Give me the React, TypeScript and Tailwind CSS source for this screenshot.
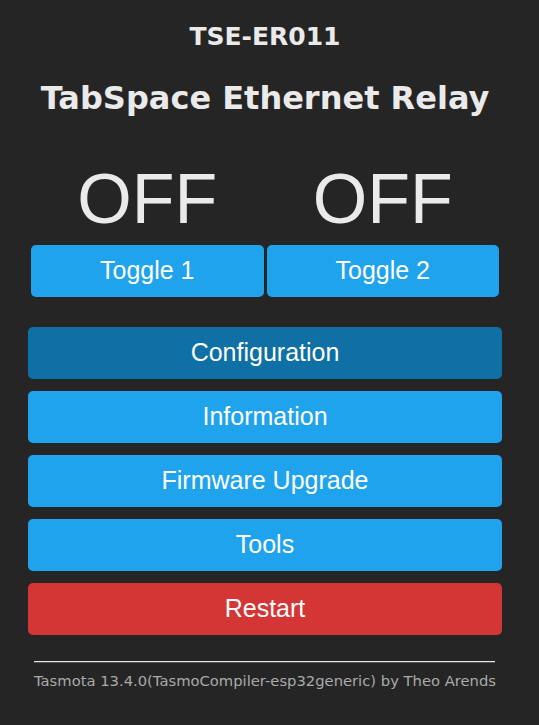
import React from "react";

const btn =
  "h-[52px] w-full rounded-[5px] flex items-center justify-center text-[25px] text-white";

export default function App() {
  return (
    <div className="min-h-[725px] w-full bg-[#252525] text-[#eaeaea]">
      <div className="ml-[28px] w-[474px] flex flex-col">
        <div
          className="pt-[25px] text-center text-[25px] leading-[24px] font-bold"
          style={{ fontFamily: '"DejaVu Sans", Verdana, sans-serif' }}
        >
          TSE-ER011
        </div>
        <div
          className="mt-[33px] text-center text-[32px] leading-[32px] font-bold"
          style={{ fontFamily: '"DejaVu Sans", Verdana, sans-serif' }}
        >
          TabSpace Ethernet Relay
        </div>
        <div style={{ fontFamily: '"Liberation Sans", Arial, sans-serif' }}>
          <div className="mt-[50px] flex px-[3px] gap-[3px]">
            <div className="flex-1 text-center text-[70px] leading-[70px]">OFF</div>
            <div className="flex-1 text-center text-[70px] leading-[70px]">OFF</div>
          </div>
          <div className="mt-[11px] flex px-[3px] gap-[3px]">
            <div className={btn + " bg-[#1fa3ec]"}>Toggle 1</div>
            <div className={btn + " bg-[#1fa3ec]"}>Toggle 2</div>
          </div>
          <div className="mt-[30px] flex flex-col gap-[12px]">
            <div className={btn + " bg-[#0e70a4]"}>Configuration</div>
            <div className={btn + " bg-[#1fa3ec]"}>Information</div>
            <div className={btn + " bg-[#1fa3ec]"}>Firmware Upgrade</div>
            <div className={btn + " bg-[#1fa3ec]"}>Tools</div>
            <div className={btn + " bg-[#d43535]"}>Restart</div>
          </div>
        </div>
        <div className="mt-[26px] ml-[6px] mr-[7px] h-[2px] bg-[#e6e6e6] border-b border-[#555]" />
        <div
          className="mt-[9px] text-center text-[14.75px] leading-[18px] text-[#aaaaaa]"
          style={{ fontFamily: '"DejaVu Sans", Verdana, sans-serif' }}
        >
          Tasmota 13.4.0(TasmoCompiler-esp32generic) by Theo Arends
        </div>
      </div>
    </div>
  );
}
